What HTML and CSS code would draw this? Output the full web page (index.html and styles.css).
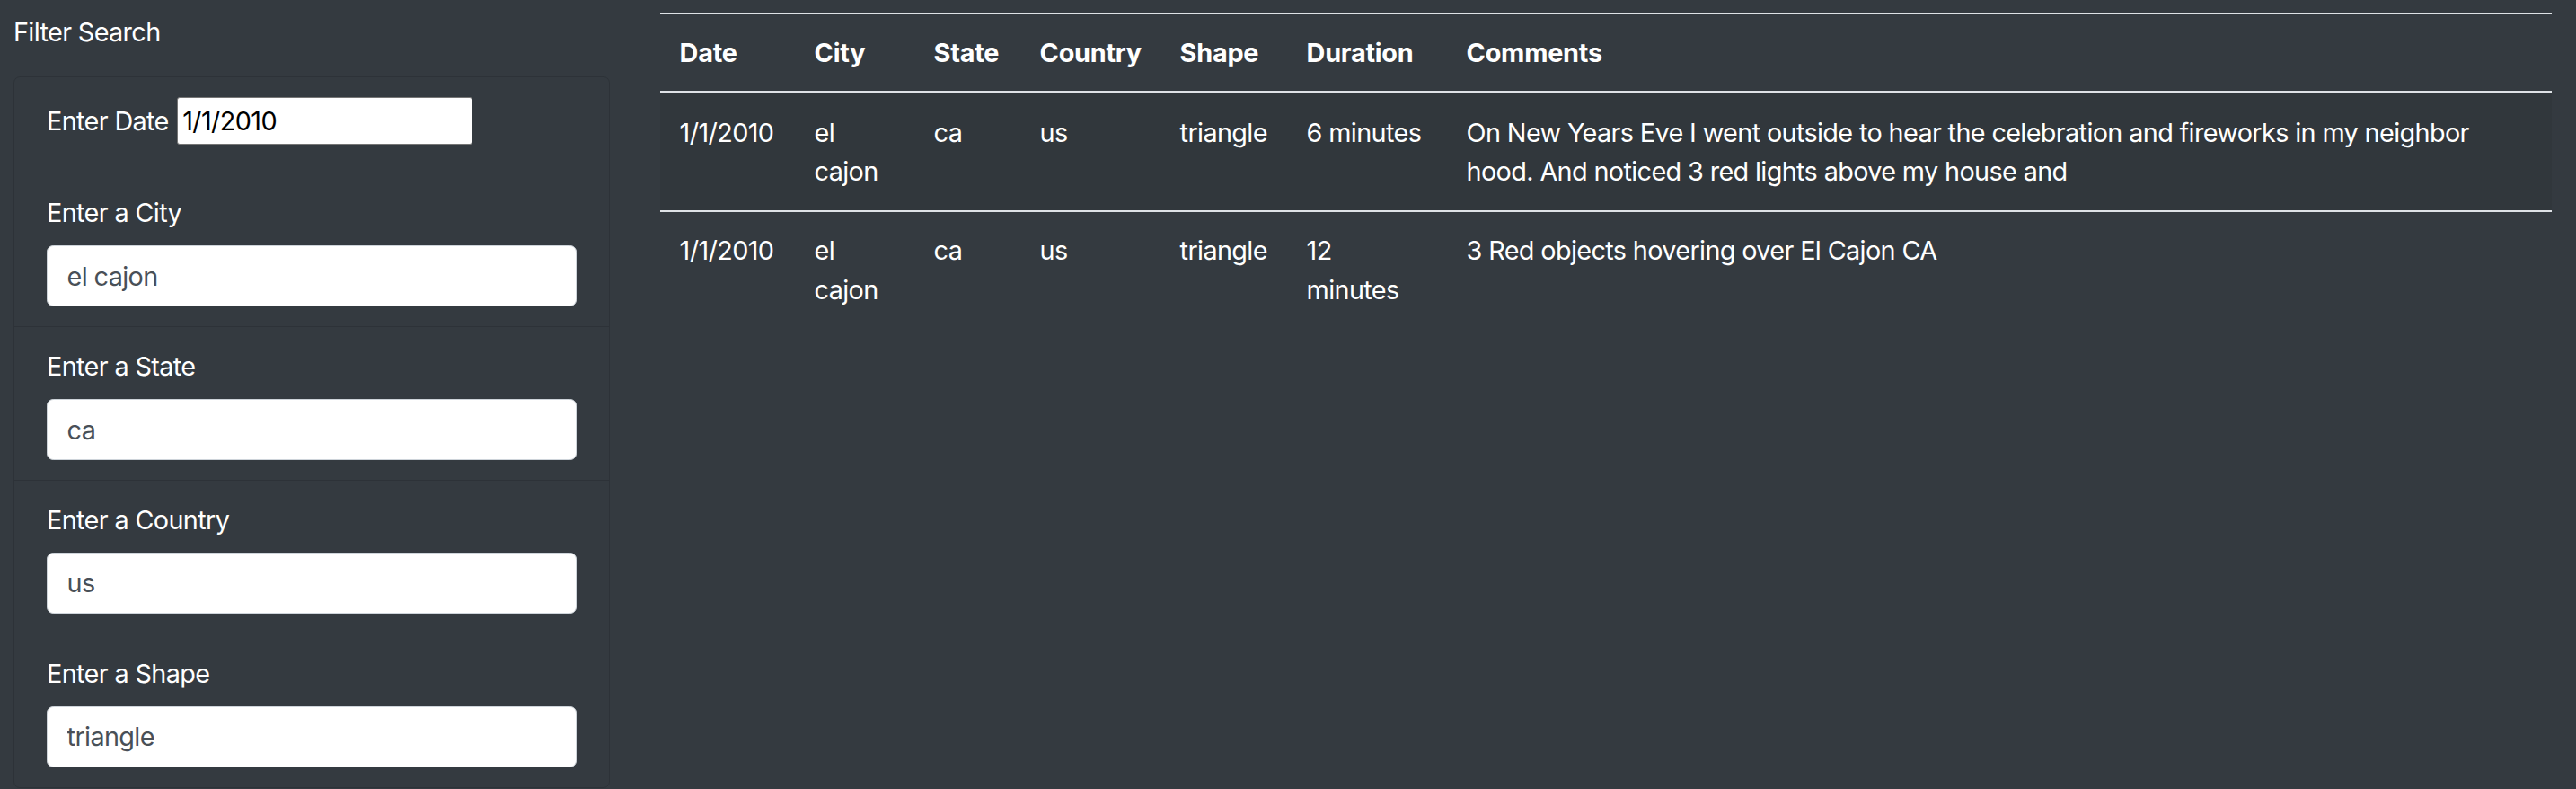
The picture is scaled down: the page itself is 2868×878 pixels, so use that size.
FILE: index.html
```html
<!DOCTYPE html>
<html lang="en">
<head>
<meta charset="utf-8">
<title>UFO Sightings</title>
<link rel="stylesheet" href="styles.css">
</head>
<body>
<div class="page">
  <aside class="sidebar">
    <div class="sidebar-title">Filter Search</div>
    <ul class="filters">
      <li class="filter filter-inline">
        <label class="filter-label" for="datetime">Enter Date</label>
        <input class="date-input" id="datetime" type="text" value="1/1/2010">
      </li>
      <li class="filter">
        <label class="filter-label" for="city">Enter a City</label>
        <input class="field" id="city" type="text" value="el cajon">
      </li>
      <li class="filter">
        <label class="filter-label" for="state">Enter a State</label>
        <input class="field" id="state" type="text" value="ca">
      </li>
      <li class="filter">
        <label class="filter-label" for="country">Enter a Country</label>
        <input class="field" id="country" type="text" value="us">
      </li>
      <li class="filter">
        <label class="filter-label" for="shape">Enter a Shape</label>
        <input class="field" id="shape" type="text" value="triangle">
      </li>
    </ul>
  </aside>
  <main class="results">
    <table class="ufo-table">
      <colgroup>
        <col class="col-date">
        <col class="col-city">
        <col class="col-state">
        <col class="col-country">
        <col class="col-shape">
        <col class="col-duration">
        <col class="col-comments">
      </colgroup>
      <thead>
        <tr>
          <th>Date</th>
          <th>City</th>
          <th>State</th>
          <th>Country</th>
          <th>Shape</th>
          <th>Duration</th>
          <th>Comments</th>
        </tr>
      </thead>
      <tbody>
        <tr>
          <td>1/1/2010</td>
          <td>el cajon</td>
          <td>ca</td>
          <td>us</td>
          <td>triangle</td>
          <td>6 minutes</td>
          <td>On New Years Eve I went outside to hear the celebration and fireworks in my neighbor hood. And noticed 3 red lights above my house and</td>
        </tr>
        <tr>
          <td>1/1/2010</td>
          <td>el cajon</td>
          <td>ca</td>
          <td>us</td>
          <td>triangle</td>
          <td>12 minutes</td>
          <td>3 Red objects hovering over El Cajon CA</td>
        </tr>
      </tbody>
    </table>
  </main>
</div>
</body>
</html>
```

FILE: styles.css
```css
* {
  box-sizing: border-box;
}

html,
body {
  margin: 0;
}

body {
  background: #343a40;
  color: #fff;
  font-family: Inter, "Noto Sans", "Liberation Sans", sans-serif;
  font-size: 28.8px;
  line-height: 1.5;
  letter-spacing: -0.022em;
}

.page {
  display: flex;
  align-items: flex-start;
  padding: 14px 27px 0 15px;
}

.sidebar {
  flex: none;
  width: 664px;
}

.sidebar-title {
  margin-bottom: 27.5px;
}

.filters {
  list-style: none;
  margin: 0;
  padding: 0;
  border: 1px solid rgba(0, 0, 0, 0.125);
  border-radius: 7.2px;
}

.filter {
  padding: 22px 36px;
  border-bottom: 1px solid rgba(0, 0, 0, 0.125);
}

.filter:last-child {
  border-bottom: 0;
}

.filter-label {
  display: inline-block;
  margin-bottom: 14.4px;
}

.field {
  display: block;
  width: 100%;
  height: 68.4px;
  padding: 10.8px 21.6px;
  font: inherit;
  letter-spacing: inherit;
  color: #495057;
  background: #fff;
  border: 1px solid #ced4da;
  border-radius: 7.2px;
  outline: none;
}

.date-input {
  width: 329px;
  height: 53px;
  margin-left: 2px;
  padding: 0 5px;
  font: inherit;
  letter-spacing: inherit;
  color: #000;
  background: #fff;
  border: 1px solid #767676;
  border-radius: 3px;
  outline: none;
}

.results {
  flex: 1;
  margin-left: 56px;
}

.ufo-table {
  width: 100%;
  border-collapse: collapse;
  table-layout: fixed;
  color: #fff;
}

.ufo-table th,
.ufo-table td {
  padding: 21.6px;
  text-align: left;
  vertical-align: top;
  border-top: 2px solid #dee2e6;
}

.ufo-table thead th {
  vertical-align: bottom;
  font-weight: 700;
  letter-spacing: -0.008em;
  padding-top: 21px;
  padding-bottom: 21px;
  border-bottom: 3px solid #dee2e6;
}

.ufo-table tbody tr:nth-child(odd) {
  background: rgba(0, 0, 0, 0.05);
}

.col-date { width: 150px; }
.col-city { width: 133px; }
.col-state { width: 118px; }
.col-country { width: 156px; }
.col-shape { width: 141px; }
.col-duration { width: 178px; }
```
